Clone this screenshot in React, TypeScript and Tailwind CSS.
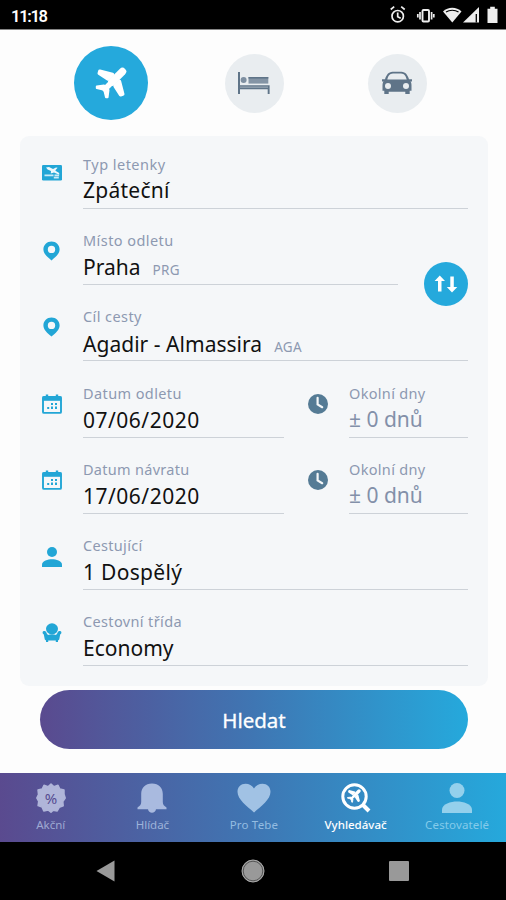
import type { ReactNode } from "react";

function PlaneShape({ size, color = "#fff" }: { size: number; color?: string }) {
  return (
    <svg width={size} height={size} viewBox="0 0 32 32" fill={color} stroke={color} strokeLinejoin="round" strokeLinecap="round">
      <path d="M27.4 4.6 17 15" strokeWidth="7.6" fill="none" />
      <path d="M18 14 10 22" strokeWidth="5.600" fill="none" />
      <path strokeWidth="3.400" d="M4.800 4.200 17.500 7.500 13 12 4.200 6.400ZM27.800 27.200 24.500 14.500 20 19 25.600 27.800Z" />
      <path strokeWidth="2" d="M1.800 19.400 9 18.500 13.500 23 12.600 30.200 11 30.200 9.200 22.800 1.800 21Z" />
    </svg>
  );
}

function BedIcon() {
  return (
    <svg width="34" height="24" viewBox="0 0 34 24" fill="#5f7488">
      <path d="M1 1h2v13.2h29.6V23h-1.9v-4.8H3V23H1Z" />
      <circle cx="6.6" cy="9" r="3" fill="#7e8fa1" />
      <path d="M11.5 6h19.8v6.6H11.5Z" fill="#8494a5" />
      <path d="M11.5 6h19.8v1.6H11.5Z" />
      <path d="M3 15.6h28v1H3Z" fill="#a8b4c0" />
    </svg>
  );
}

function CarIcon() {
  return (
    <svg width="34" height="24" viewBox="0 0 34 24" fill="#5f7488">
      <path fillRule="evenodd" d="M5 8.2C6.500 3.500 8.500 1 12.500.700h9C25.500 1 27.500 3.500 29 8.200h3v2.300h-1.500c1 1.300 1 2.800 1 4.800v4.500h-1.800V23h-4.400v-2.200H8.700V23H4.300v-3.200H2.500v-4.500c0-2 0-3.500 1-4.800H2V8.200ZM7.300 8.500h19.400C25.700 5 24.500 2.900 21 2.600h-8C9.500 2.900 8.300 5 7.300 8.500Z" />
      <circle cx="8" cy="15" r="3" fill="#e9edf0" />
      <circle cx="26" cy="15" r="3" fill="#e9edf0" />
    </svg>
  );
}

function TicketIcon() {
  return (
    <svg width="20" height="16" viewBox="0 0 20 16">
      <rect width="20" height="15.500" rx="1.200" fill="#22a6d6" />
      <path d="M4 2.600 7 2l4 2 3-1.600 1.600.4-2.200 2.400.4.800 3.400 2v1.800L12 7.600l-3.200.9L9 6 5.600 4.400Z" fill="#eef8fc" />
      <path d="M2.500 10.400h9M11.800 12.600h5M12.500 10.400h4.600" stroke="#c9eaf6" strokeWidth="1.600" />
    </svg>
  );
}

function PinIcon() {
  return (
    <svg width="17" height="20" viewBox="0 0 17 20">
      <path fillRule="evenodd" fill="#22a6d6" d="M8.500.5C4 .5.4 4 .4 8.400c0 4.300 4 7.500 8.100 11.100 4.100-3.600 8.100-6.800 8.100-11.100C16.600 4 13 .5 8.500.5Zm0 4.200a3.700 3.700 0 1 1 0 7.400 3.700 3.700 0 0 1 0-7.400Z" />
    </svg>
  );
}

function CalendarIcon() {
  return (
    <svg width="20" height="20" viewBox="0 0 20 20">
      <path d="M5 .5v4M15 .5v4" stroke="#22a6d6" strokeWidth="2.400" />
      <rect x="1" y="2.900" width="18" height="16" rx="1" fill="none" stroke="#22a6d6" strokeWidth="1.900" />
      <path d="M.5 2.500h19v4.300H.5Z" fill="#22a6d6" />
      <path fill="#22a6d6" d="M9 9h2v2H9ZM13 9h2v2h-2ZM5.200 13h2v2h-2ZM9 12.500h2V15H9ZM13 12.500h2V15h-2Z" />
    </svg>
  );
}

function PersonIcon({ w, color }: { w: number; color: string }) {
  return (
    <svg width={w} height={w} viewBox="0 0 20 20" fill={color}>
      <circle cx="10" cy="5" r="5" />
      <path d="M0 20v-2.300C0 14 6 12.300 10 12.300S20 14 20 17.700V20Z" />
    </svg>
  );
}

function SeatIcon() {
  return (
    <svg width="20" height="20" viewBox="0 0 20 20" fill="#22a6d6">
      <ellipse cx="10" cy="5.800" rx="6" ry="5.500" />
      <path d="M.6 9.600c0-1.200 1-1.700 2-1.500 1.200.2 1.700.8 2.200 2.400l1.200 1.400c2.500-.8 5.500-.8 8 0l1.200-1.400c.5-1.600 1-2.200 2.200-2.400 1-.2 2 .3 2 1.500 0 1-.6 1.500-1.200 2l-1 5-1.200.9V19h-2.200v-1.400H6.200V19H4v-1.500l-1.200-.9-1-5C1.200 11.100.6 10.600.6 9.600Z" />
    </svg>
  );
}

function ClockIcon() {
  return (
    <svg width="20" height="20" viewBox="0 0 20 20">
      <circle cx="10" cy="10" r="10" fill="#557b95" />
      <path d="M9.600 3.800v6.600l4.600 2.800" fill="none" stroke="#f4f7f9" strokeWidth="2.200" strokeLinecap="round" />
    </svg>
  );
}

function Category({ active, children }: { active?: boolean; children: ReactNode }) {
  return (
    <div className="flex w-[143px] items-center justify-center">
      <div className={active ? "flex h-[74px] w-[74px] items-center justify-center rounded-full bg-[#25a9dc]" : "flex h-[59px] w-[59px] items-center justify-center rounded-full bg-[#e9edf0]"}>
        {children}
      </div>
    </div>
  );
}

type FieldProps = {
  label: string;
  labelClass: string;
  value: string;
  valueClass: string;
  code?: string;
  className: string;
};

function Field({ label, labelClass, value, valueClass, code, className }: FieldProps) {
  return (
    <div className={`flex h-[55px] flex-col whitespace-nowrap border-b border-[#cdd2d8] ${className}`}>
      <div className={`h-5 text-[14.5px] leading-5 text-[#8d99b1] ${labelClass}`}>{label}</div>
      <div className="flex items-baseline">
        <span className={`text-[21px] leading-7 ${valueClass}`}>{value}</span>
        {code && <span className="ml-3 text-[13.500px] tracking-[0.3px] text-[#8d99b1]">{code}</span>}
      </div>
    </div>
  );
}

function Row({ icon, className, children }: { icon: ReactNode; className: string; children: ReactNode }) {
  return (
    <div className={`flex items-end ${className}`}>
      <div className="flex h-[55px] w-[63px] items-start justify-center pt-[11px]">{icon}</div>
      {children}
    </div>
  );
}

function NavItem({ label, className, children }: { label: string; className: string; children: ReactNode }) {
  return (
    <div className={`flex flex-1 flex-col items-center whitespace-nowrap pt-[9px] ${className}`}>
      <div className="flex h-[31px] items-center">{children}</div>
      <div className="mt-1 text-[11.5px] leading-4">{label}</div>
    </div>
  );
}

export default function App() {
  return (
    <div className="flex h-[900px] w-[506px] flex-col overflow-hidden bg-[#fdfdfd] font-['Noto_Sans','Open_Sans',sans-serif]">
      <header className="flex h-[30px] items-center justify-between border-b border-[#858585] bg-black pl-[11px] pr-[8px] pt-[2px] text-white">
        <span className="pt-[2px] font-['Roboto',sans-serif] text-[16.500px] font-semibold leading-5 tracking-[-1.300px]">11:18</span>
        <svg width="108" height="20" viewBox="0 0 108 20" fill="#eee">
          <g fill="none" stroke="#eee" strokeWidth="1.700">
            <circle cx="7.700" cy="10.200" r="5.700" />
            <path d="M.7 3.500 4.200.7M11.200.7 14.700 3.500M7.700 6.500v4.200l3 1.500" />
            <rect x="32.500" y="4" width="6.500" height="11.500" rx="1" strokeWidth="1.900" />
            <path d="M30 6v7.500M41.600 6V13.500M27.800 8v3.500M43.800 8v3.500" strokeWidth="1.700" />
          </g>
          <path d="M53 5.500c5-5 13.500-5 18.500 0L62.300 16.500Z" />
          <path d="M56 6c3.500-2.300 9-2.300 12.500 0" fill="none" stroke="#000" strokeWidth="1.100" />
          <path d="M89 1V16.500H73Z" />
          <path d="M86.300 8v8.500" stroke="#000" strokeWidth="1.300" />
          <path d="M97.500 2.700h2.700V.7h4.600v2h2.700V17h-10Z" />
        </svg>
      </header>

      <div className="flex h-[106px] items-center justify-center pl-[2px]">
        <Category active><PlaneShape size={32} /></Category>
        <Category><BedIcon /></Category>
        <Category><CarIcon /></Category>
      </div>

      <main className="ml-5 h-[550px] w-[468px] rounded-[9px] bg-[#f5f7f9] text-[#111]">
        <Row className="h-[73px]" icon={<TicketIcon />}>
          <Field className="w-[385px]" label="Typ letenky" labelClass="tracking-[0.48px]" value="Zpáteční" valueClass="pt-[2px] tracking-[0.25px]" />
        </Row>
        <Row className="h-[76px]" icon={<PinIcon />}>
          <Field className="w-[315px]" label="Místo odletu" labelClass="tracking-[0.44px]" value="Praha" valueClass="pt-[3px]" code="PRG" />
          <div className="relative top-[21px] ml-[26px] flex h-11 w-11 items-center justify-center rounded-full bg-[#25a9dc]">
            <svg width="24" height="18" viewBox="0 0 24 18" fill="#fff">
              <path d="M5.800.5 11 6H7.500v10.500H4V6H.6ZM18 17.500 12.800 12h3.500V1.500h3.500V12h3.500Z" />
            </svg>
          </div>
        </Row>
        <Row className="h-[76px]" icon={<PinIcon />}>
          <Field className="w-[385px]" label="Cíl cesty" labelClass="tracking-[0.42px]" value="Agadir - Almassira" valueClass="pt-1 tracking-[0.03px]" code="AGA" />
        </Row>
        <Row className="h-[77px]" icon={<CalendarIcon />}>
          <Field className="w-[201px]" label="Datum odletu" labelClass="tracking-[0.4px]" value="07/06/2020" valueClass="pt-[3px] tracking-[0.5px]" />
          <div className="flex h-[55px] w-[65px] items-start pl-6 pt-[11px]"><ClockIcon /></div>
          <Field className="w-[119px]" label="Okolní dny" labelClass="tracking-[0.32px]" value="± 0 dnů" valueClass="pt-[2px] text-[#8390a9]" />
        </Row>
        <Row className="h-[76px]" icon={<CalendarIcon />}>
          <Field className="w-[201px]" label="Datum návratu" labelClass="tracking-[0.29px]" value="17/06/2020" valueClass="pt-[3px] tracking-[0.5px]" />
          <div className="flex h-[55px] w-[65px] items-start pl-6 pt-[11px]"><ClockIcon /></div>
          <Field className="w-[119px]" label="Okolní dny" labelClass="tracking-[0.32px]" value="± 0 dnů" valueClass="pt-[2px] text-[#8390a9]" />
        </Row>
        <Row className="h-[76px]" icon={<div className="pt-px"><PersonIcon w={20} color="#22a6d6" /></div>}>
          <Field className="w-[385px]" label="Cestující" labelClass="tracking-[0.32px]" value="1 Dospělý" valueClass="pt-[3px] tracking-[0.3px]" />
        </Row>
        <Row className="h-[76px]" icon={<div className="pt-px"><SeatIcon /></div>}>
          <Field className="w-[385px]" label="Cestovní třída" labelClass="tracking-[0.36px]" value="Economy" valueClass="pt-[3px]" />
        </Row>
      </main>

      <button className="ml-10 mt-1 flex h-[59px] w-[428px] shrink-0 items-center justify-center rounded-full bg-[linear-gradient(90deg,#5a4a8f_0%,#3f76b3_50%,#25a9dc_100%)] pt-px text-[20.5px] text-white">
        <span className="[-webkit-text-stroke:0.3px_white]">Hledat</span>
      </button>

      <nav className="mt-6 flex h-[69px] w-[508px] shrink-0 bg-[linear-gradient(90deg,#5a4a8f_0%,#3f76b3_50%,#25a9dc_100%)]">
        <NavItem label="Akční" className="text-[#9fa9d2]">
          <svg width="30" height="30" viewBox="0 0 30 30" fill="#b0b5d9" stroke="#b0b5d9" strokeWidth="1.500" strokeLinejoin="round">
            <path d="m15 1 3 2.800 4-1.500 1.800 3.700 4.200.9v4.300L29.200 15l-2.400 3.500.4 4.300-4 1.500-2 3.700-4-.8L15 29.200l-3-2.200-4.200 1-1.700-3.900-4-1.500.6-4.200L.8 15 2.500 11.500 2 7l4.200-1L8 2.300l4 1.500Z" />
            <text x="15" y="20.500" textAnchor="middle" fontSize="15" fill="#554b91" stroke="none">%</text>
          </svg>
        </NavItem>
        <NavItem label="Hlídač" className="text-[#9db2d9]">
          <svg width="30" height="30" viewBox="0 0 30 30" fill="#a9badf">
            <path d="M15 .5c6.800 0 10.800 4.500 10.800 10.500v8c0 2.500 1.300 4 3.700 5.500v1.800H19c-.3 2-2 3.500-4 3.500s-3.700-1.500-4-3.500H.5v-1.800c2.400-1.500 3.700-3 3.700-5.500v-8C4.200 5 8.200.5 15 .5Z" />
          </svg>
        </NavItem>
        <NavItem label="Pro Tebe" className="tracking-[0.2px] text-[#93bce1]">
          <svg width="34" height="30" viewBox="0 0 34 30" fill="#a1c2e4">
            <path d="M17 29.500C10 23 .5 16.500.5 8.700.5 4 4 .8 8.500.8c3.500 0 6.700 1.700 8.500 4.700C18.800 2.500 22 .8 25.500.8c4.500 0 8 3.200 8 7.900 0 7.800-9.500 14.300-16.500 20.800Z" />
          </svg>
        </NavItem>
        <NavItem label="Vyhledávač" className="font-medium text-white">
          <div className="grid place-items-center">
            <svg className="col-start-1 row-start-1" width="30" height="30" viewBox="0 0 30 30" fill="none" stroke="#fff">
              <circle cx="13.500" cy="13.500" r="11.700" strokeWidth="3" />
              <path d="m22 22 6 6" strokeWidth="4" />
            </svg>
            <div className="col-start-1 row-start-1 pb-[3px] pr-[3px]"><PlaneShape size={14} /></div>
          </div>
        </NavItem>
        <NavItem label="Cestovatelé" className="tracking-[0.15px] text-[#84cbea]">
          <PersonIcon w={30} color="#94d0ec" />
        </NavItem>
      </nav>

      <footer className="flex h-[58px] shrink-0 items-center justify-between bg-black pl-[96px] pr-[97px]">
        <svg width="19" height="22" viewBox="0 0 19 22" fill="#999"><path d="M18.500.5v21L.5 11Z" /></svg>
        <svg className="ml-px" width="24" height="24" viewBox="0 0 24 24"><circle cx="12" cy="12" r="11" fill="#999" stroke="#aaa" /><circle cx="12" cy="12" r="9.800" fill="none" stroke="#444" strokeWidth=".8" /></svg>
        <div className="h-5 w-5 rounded-[1px] bg-[#999]" />
      </footer>
    </div>
  );
}
